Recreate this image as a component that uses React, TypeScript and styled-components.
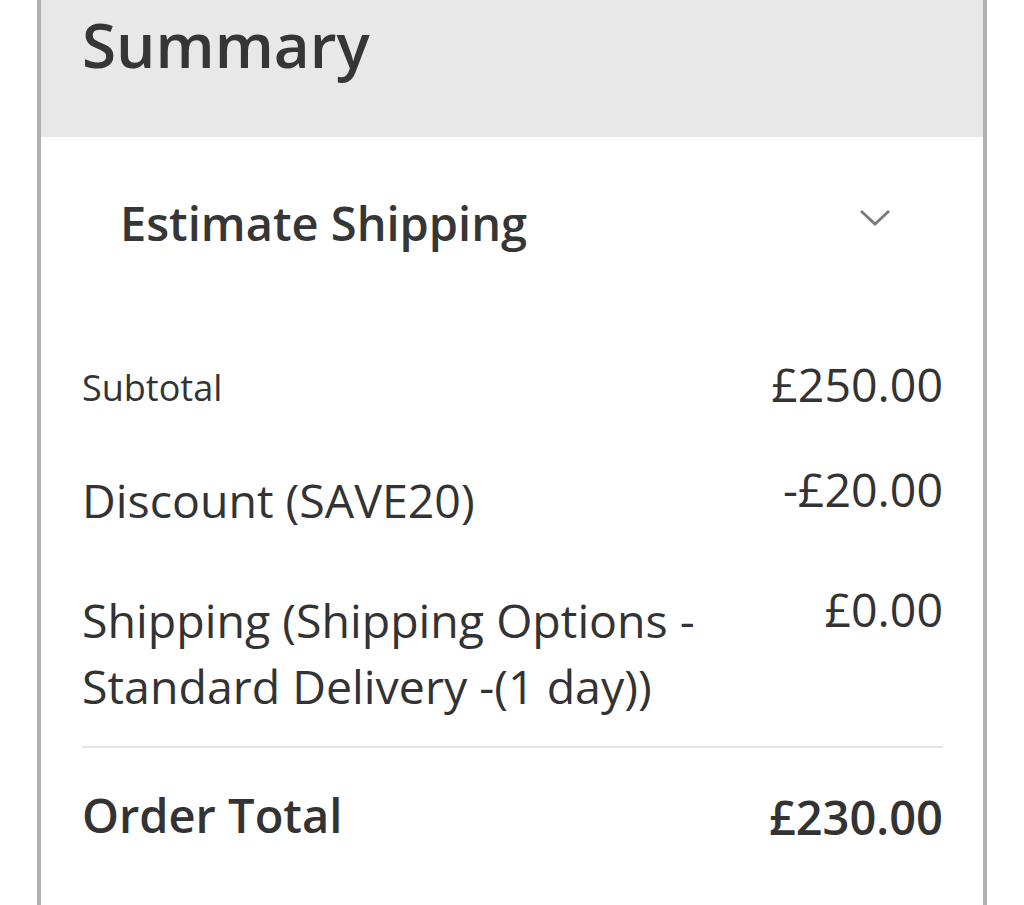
import React from 'react';
import styled, { createGlobalStyle } from 'styled-components';

type RowKind = 'small' | 'normal' | 'grand';

interface RowProps {
  kind: RowKind;
}

const GlobalStyle = createGlobalStyle`
  html, body {
    margin: 0;
    padding: 0;
    background: #ffffff;
  }
  body {
    font-family: "Open Sans", "Noto Sans", sans-serif;
    color: #333333;
  }
`

const Panel = styled.div`
  margin-left: 37px;
  width: 942px;
  min-height: 905px;
  border-left: 4px solid #b1b1b1;
  border-right: 4px solid #b1b1b1;
  background: #ffffff;
`

const Header = styled.div`
  height: 137px;
  box-sizing: border-box;
  padding: 4px 41px 0;
  background: #e8e8e8;
`

const Title = styled.h2`
  margin: 0;
  font-size: 62px;
  line-height: 80px;
  font-weight: 600;
  color: #363636;
`

const Estimate = styled.div`
  display: flex;
  align-items: flex-start;
  justify-content: space-between;
  padding: 58px 92px 0 79px;
`

const EstimateTitle = styled.span`
  font-size: 47px;
  line-height: 56px;
  font-weight: 600;
  color: #363636;
`

const Chevron = styled.svg`
  width: 32px;
  height: 20px;
  margin-top: 13px;
`

const Totals = styled.div`
  padding: 111px 40px 0 41px;
`

const Row = styled.div<RowProps>`
  display: flex;
  align-items: flex-start;
  justify-content: space-between;
  padding-bottom: ${(p) => (p.kind === 'small' ? '53px' : p.kind === 'normal' ? '54px' : '0')};

  &:nth-last-of-type(2) {
    padding-bottom: 27px;
  }
`

const Label = styled.div<RowProps>`
  max-width: 640px;
  font-size: ${(p) => (p.kind === 'small' ? '36px' : p.kind === 'normal' ? '46.5px' : '47px')};
  line-height: ${(p) => (p.kind === 'small' ? '52px' : '66px')};
  font-weight: ${(p) => (p.kind === 'grand' ? 600 : 400)};
`

const Amount = styled.div<RowProps>`
  text-align: right;
  white-space: nowrap;
  font-size: ${(p) => (p.kind === 'grand' ? '47px' : '46.5px')};
  line-height: ${(p) => (p.kind === 'grand' ? '70px' : '44px')};
  font-weight: ${(p) => (p.kind === 'grand' ? 600 : 400)};
`

const Divider = styled.hr`
  margin: 0 0 34px;
  border: 0;
  border-top: 2px solid #e6e6e6;
`

const rows: { kind: RowKind; label: string; amount: string }[] = [
  { kind: 'small', label: 'Subtotal', amount: '£250.00' },
  { kind: 'normal', label: 'Discount (SAVE20)', amount: '-£20.00' },
  { kind: 'normal', label: 'Shipping (Shipping Options - Standard Delivery -(1 day))', amount: '£0.00' },
];

export default function App() {
  return (
    <>
      <GlobalStyle />
      <Panel>
        <Header>
          <Title>Summary</Title>
        </Header>
        <Estimate>
          <EstimateTitle>Estimate Shipping</EstimateTitle>
          <Chevron viewBox="0 0 32 20">
            <path d="M2 3 L16 16 L30 3" fill="none" stroke="#7a7a7a" strokeWidth="2.8" />
          </Chevron>
        </Estimate>
        <Totals>
          {rows.map((r) => (
            <Row key={r.label} kind={r.kind}>
              <Label kind={r.kind}>{r.label}</Label>
              <Amount kind={r.kind}>{r.amount}</Amount>
            </Row>
          ))}
          <Divider />
          <Row kind="grand">
            <Label kind="grand">Order Total</Label>
            <Amount kind="grand">£230.00</Amount>
          </Row>
        </Totals>
      </Panel>
    </>
  );
}
